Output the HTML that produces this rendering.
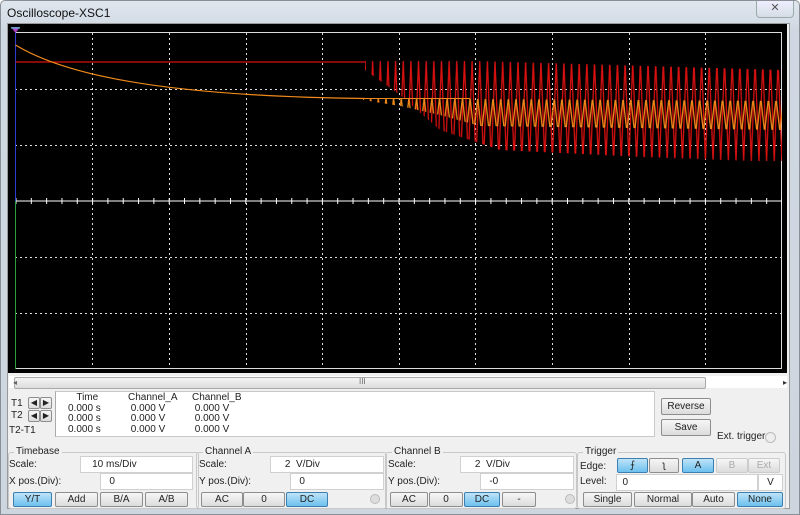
<!DOCTYPE html>
<html><head><style>
body{margin:0;width:800px;height:515px;overflow:hidden;background:#fff;font-family:"Liberation Sans",sans-serif;font-size:10px;color:#222}
.win{position:absolute;left:0;top:0;width:798px;height:513px;border:1px solid #8a8f95;background:linear-gradient(#dfe6ee,#cfd8e2 30px,#cdd6df);border-radius:5px 5px 0 0}
.title{position:absolute;left:6px;top:5px;font-size:12px;color:#111}
.close{position:absolute;left:755px;top:0;width:36px;height:16px;border:1px solid #9aa;border-top:0;border-radius:0 0 4px 4px;background:linear-gradient(#eef,#d6dde5);text-align:center;font-size:11px;color:#555;line-height:15px}
.client{position:absolute;left:7px;top:23px;width:781px;height:484px;background:#f0f0f0;border:1px solid #999}
.scope{position:absolute;left:8px;top:24px;width:779px;height:349px;background:#000}
.scroll{position:absolute;left:9px;top:376px;width:778px;height:12px;background:#fff}
.thumb{position:absolute;left:14px;top:377px;width:690px;height:10px;background:linear-gradient(#f4f4f4,#dcdcdc);border:1px solid #aaa;border-radius:2px}
.abs{position:absolute}
.box{position:absolute;background:#fff;border:1px solid #c8c8c8}
.btn{position:absolute;height:13px;border:1px solid #8e8e8e;border-radius:2px;background:linear-gradient(#f6f6f6,#dcdcdc);text-align:center;line-height:13px;font-size:10px}
.on{background:linear-gradient(#bfe3f8,#6cc0ee);border-color:#3c7fb1}
.grp{position:absolute;border:1px solid #c8c8c8;border-radius:3px}
.in{position:absolute;height:15px;background:#fff;border:1px solid #d0d0d0;line-height:15px;font-size:10px}
</style></head><body>
<div class="win">
<div class="title">Oscilloscope-XSC1</div>
<div class="close">✕</div>
</div>
<div class="client"></div>
<div class="scope"></div>
<svg class="abs" style="left:0;top:0" width="800" height="380">
<defs>
<pattern id="pr" patternUnits="userSpaceOnUse" x="365" y="61" width="7.65" height="400">
<path d="M0 0 L3.8 100 L7.65 0" fill="none" stroke="#d81010" stroke-width="1.3"/>
</pattern>
<pattern id="po" patternUnits="userSpaceOnUse" x="363" y="98" width="7.65" height="400">
<path d="M0 0 L3.8 34 L7.65 0" fill="none" stroke="#f08a1a" stroke-width="1.3"/>
</pattern>
<pattern id="pt" patternUnits="userSpaceOnUse" x="15.5" y="0" width="15.32" height="400">
<line x1="0.5" y1="198" x2="0.5" y2="204" stroke="#fff"/>
</pattern>
</defs>
<g stroke="#ddd" stroke-width="1" stroke-dasharray="2,3" fill="none">
<line x1="92.5" y1="33" x2="92.5" y2="369"/><line x1="169.5" y1="33" x2="169.5" y2="369"/>
<line x1="246.5" y1="33" x2="246.5" y2="369"/><line x1="322.5" y1="33" x2="322.5" y2="369"/>
<line x1="399.5" y1="33" x2="399.5" y2="369"/><line x1="475.5" y1="33" x2="475.5" y2="369"/>
<line x1="552.5" y1="33" x2="552.5" y2="369"/><line x1="629.5" y1="33" x2="629.5" y2="369"/>
<line x1="705.5" y1="33" x2="705.5" y2="369"/>
<line x1="15" y1="89.5" x2="782" y2="89.5"/><line x1="15" y1="145.5" x2="782" y2="145.5"/>
<line x1="15" y1="257.5" x2="782" y2="257.5"/><line x1="15" y1="313.5" x2="782" y2="313.5"/>
</g>
<rect x="15.5" y="32.5" width="766" height="336" fill="none" stroke="#ddd"/>
<line x1="15.5" y1="201" x2="782" y2="201" stroke="#fff"/>
<rect x="15" y="196" width="767" height="10" fill="url(#pt)"/>
<line x1="15.5" y1="30" x2="15.5" y2="201" stroke="#2a3fd0"/>
<line x1="15.5" y1="201" x2="15.5" y2="369" stroke="#2aa040"/>
<polygon points="11,27 20,27 15.5,33" fill="#b040c0"/>
<line x1="11" y1="28" x2="20" y2="28" stroke="#40e0e0"/>
<path d="M15.5 62 H366" stroke="#d81010" stroke-width="1.2" fill="none"/>
<polygon points="365,61 480,61 782,70 782,162 640,157 500,150 440,130 400,95 365,70" fill="url(#pr)"/>
<path d="M15.5 45 C60 72,150 96,365 98.5" stroke="#f08a1a" stroke-width="1.2" fill="none"/>
<path d="M365 98.5 H470" stroke="#f08a1a" stroke-width="1" fill="none"/>
<polygon points="363,98 480,99 782,101 782,130 480,126 440,115 400,106 363,100" fill="url(#po)"/>
</svg>
<div class="scroll"></div><div class="thumb"></div>
<div class="abs" style="left:13px;top:378px;font-size:8px;color:#666">◂</div>
<div class="abs" style="left:359px;top:377px;font-size:8px;color:#666">III</div>
<div class="abs" style="left:783px;top:378px;font-size:8px;color:#333">▸</div>

<div class="box" style="left:55px;top:391px;width:199px;height:44px;border-left:1px solid #aaa"></div>
<div class="box" style="left:250px;top:391px;width:404px;height:44px;border-left:0"></div>
<div class="abs" style="left:11px;top:398px">T1</div>
<div class="abs" style="left:11px;top:410px">T2</div>
<div class="abs" style="left:9px;top:425px">T2-T1</div>
<div class="btn" style="left:28px;top:397px;width:10px;height:10px;line-height:10px;font-size:8px">◀</div>
<div class="btn" style="left:40px;top:397px;width:10px;height:10px;line-height:10px;font-size:8px">▶</div>
<div class="btn" style="left:28px;top:410px;width:10px;height:10px;line-height:10px;font-size:8px">◀</div>
<div class="btn" style="left:40px;top:410px;width:10px;height:10px;line-height:10px;font-size:8px">▶</div>
<div class="abs" style="left:68px;top:393px;line-height:10.5px">&nbsp;&nbsp;&nbsp;Time<br>0.000 s<br>0.000 s<br>0.000 s</div>
<div class="abs" style="left:128px;top:393px;line-height:10.5px">Channel_A<br>&nbsp;0.000 V<br>&nbsp;0.000 V<br>&nbsp;0.000 V</div>
<div class="abs" style="left:192px;top:393px;line-height:10.5px">Channel_B<br>&nbsp;0.000 V<br>&nbsp;0.000 V<br>&nbsp;0.000 V</div>
<div class="btn" style="left:661px;top:398px;width:48px;height:15px;line-height:15px">Reverse</div>
<div class="btn" style="left:661px;top:419px;width:48px;height:15px;line-height:15px">Save</div>
<div class="abs" style="left:717px;top:431px">Ext. trigger</div>
<div class="abs" style="left:765px;top:432px;width:9px;height:9px;border:1px solid #bbb;border-radius:50%;background:#eee"></div>

<div class="grp" style="left:8px;top:452px;width:189px;height:55px"></div>
<div class="abs" style="left:14px;top:446px;background:#f0f0f0;padding:0 2px">Timebase</div>
<div class="abs" style="left:9px;top:459px">Scale:</div>
<div class="in" style="left:80px;top:456px;width:111px">&nbsp;&nbsp;&nbsp;&nbsp;10 ms/Div</div>
<div class="abs" style="left:9px;top:476px">X pos.(Div):</div>
<div class="in" style="left:100px;top:473px;width:91px">&nbsp;&nbsp;&nbsp;0</div>
<div class="btn on" style="left:13px;top:492px;width:37px">Y/T</div>
<div class="btn" style="left:55px;top:492px;width:41px">Add</div>
<div class="btn" style="left:100px;top:492px;width:41px">B/A</div>
<div class="btn" style="left:145px;top:492px;width:41px">A/B</div>

<div class="grp" style="left:196px;top:452px;width:189px;height:55px"></div>
<div class="abs" style="left:203px;top:446px;background:#f0f0f0;padding:0 2px">Channel A</div>
<div class="abs" style="left:199px;top:459px">Scale:</div>
<div class="in" style="left:270px;top:456px;width:112px">&nbsp;&nbsp;&nbsp;&nbsp;&nbsp;2&nbsp; V/Div</div>
<div class="abs" style="left:199px;top:476px">Y pos.(Div):</div>
<div class="in" style="left:290px;top:473px;width:92px">&nbsp;&nbsp;&nbsp;0</div>
<div class="btn" style="left:201px;top:492px;width:40px">AC</div>
<div class="btn" style="left:243px;top:492px;width:40px">0</div>
<div class="btn on" style="left:286px;top:492px;width:40px">DC</div>
<div class="abs" style="left:370px;top:494px;width:8px;height:8px;border:1px solid #bbb;border-radius:50%;background:#ddd"></div>

<div class="grp" style="left:385px;top:452px;width:190px;height:55px"></div>
<div class="abs" style="left:392px;top:446px;background:#f0f0f0;padding:0 2px">Channel B</div>
<div class="abs" style="left:388px;top:459px">Scale:</div>
<div class="in" style="left:460px;top:456px;width:112px">&nbsp;&nbsp;&nbsp;&nbsp;&nbsp;2&nbsp; V/Div</div>
<div class="abs" style="left:388px;top:476px">Y pos.(Div):</div>
<div class="in" style="left:480px;top:473px;width:92px">&nbsp;&nbsp;&nbsp;-0</div>
<div class="btn" style="left:390px;top:492px;width:36px">AC</div>
<div class="btn" style="left:429px;top:492px;width:32px">0</div>
<div class="btn on" style="left:464px;top:492px;width:34px">DC</div>
<div class="btn" style="left:502px;top:492px;width:32px">-</div>
<div class="abs" style="left:565px;top:494px;width:8px;height:8px;border:1px solid #bbb;border-radius:50%;background:#ddd"></div>

<div class="grp" style="left:577px;top:452px;width:207px;height:55px"></div>
<div class="abs" style="left:583px;top:446px;background:#f0f0f0;padding:0 2px">Trigger</div>
<div class="abs" style="left:580px;top:461px">Edge:</div>
<div class="btn on" style="left:617px;top:458px;width:29px">⨍</div>
<div class="btn" style="left:649px;top:458px;width:28px">ʅ</div>
<div class="btn on" style="left:682px;top:458px;width:30px">A</div>
<div class="btn" style="left:716px;top:458px;width:30px;color:#aaa;border-color:#ccc">B</div>
<div class="btn" style="left:748px;top:458px;width:30px;color:#aaa;border-color:#ccc">Ext</div>
<div class="abs" style="left:580px;top:476px">Level:</div>
<div class="in" style="left:616px;top:474px;width:140px">&nbsp;&nbsp;0</div>
<div class="in" style="left:758px;top:474px;width:23px;text-align:center">V</div>
<div class="btn" style="left:583px;top:492px;width:47px">Single</div>
<div class="btn" style="left:634px;top:492px;width:56px">Normal</div>
<div class="btn" style="left:692px;top:492px;width:41px">Auto</div>
<div class="btn on" style="left:737px;top:492px;width:44px">None</div>
</body></html>
